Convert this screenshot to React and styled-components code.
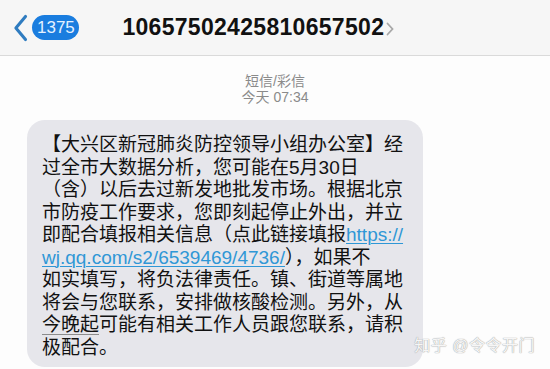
import styled, { createGlobalStyle } from 'styled-components';

const Global = createGlobalStyle`
  html, body {
    margin: 0;
    padding: 0;
    background: #fdfdfd;
    overflow: hidden;
  }
  body {
    font-family: "Liberation Sans", "Noto Sans CJK SC", sans-serif;
  }
`;

const Screen = styled.div`
  position: relative;
  width: 550px;
  height: 369px;
  overflow: hidden;
  display: flex;
  flex-direction: column;
  background: #fdfdfd;
`;

const Header = styled.div`
  height: 56px;
  flex-shrink: 0;
  display: flex;
  align-items: center;
  padding-left: 13px;
  background: #f6f6f6;
  border-bottom: 1px solid #dadada;
  box-sizing: border-box;
`;

const Badge = styled.div`
  margin-left: 4px;
  width: 47px;
  height: 25px;
  border-radius: 13px;
  background: #1a7ddf;
  color: #e4f1ff;
  font-size: 17px;
  display: flex;
  align-items: center;
  justify-content: center;
`;

const Title = styled.div`
  margin-left: 43px;
  font-size: 23px;
  font-weight: bold;
  color: #111;
  letter-spacing: 0.3px;
`;

const Meta = styled.div`
  margin-top: 17px;
  text-align: center;
  color: #8a8a8a;
  font-size: 14px;
  line-height: 16px;
`;

const Bubble = styled.div`
  margin: 15px 0 0 27px;
  width: 396px;
  box-sizing: border-box;
  padding: 14px 0 8px 15px;
  background: #e6e6eb;
  border-radius: 18px;
  font-size: 19px;
  line-height: 22.5px;
  color: #111;
  white-space: nowrap;
`;

const Line = styled.div``;

const Link = styled.span`
  color: #2f97d6;
  text-decoration: underline;
  text-decoration-thickness: 1px;
  text-underline-offset: 2px;
`;

const DateMark = styled.span`
  text-decoration: underline;
  text-decoration-color: #8c8c8c;
  text-decoration-thickness: 1px;
  text-underline-offset: 3px;
`;

const Watermark = styled.div`
  position: absolute;
  right: 15px;
  bottom: 13px;
  font-size: 16px;
  color: #f6f6f6;
  text-shadow: 0 0 1px #a8a8a8, 0 0 1px #a8a8a8;
  letter-spacing: 0.5px;
`;

function Chevron({ size = 28, color = '#2f7cc0', stroke = 3.2 }) {
  return (
    <svg width={size * 0.55} height={size} viewBox="0 0 16 28">
      <path d="M13 2 L3 14 L13 26" fill="none" stroke={color} strokeWidth={stroke} strokeLinecap="round" strokeLinejoin="round" />
    </svg>
  );
}

const Forward = styled.span`
  margin-left: 2px;
  display: inline-flex;
  vertical-align: middle;
`;

export default function App() {
  return (
    <Screen>
      <Global />
      <Header>
        <Chevron />
        <Badge>1375</Badge>
        <Title>
          10657502425810657502
          <Forward>
            <svg width="8" height="14" viewBox="0 0 8 14">
              <path d="M1.5 1.5 L6.5 7 L1.5 12.5" fill="none" stroke="#a8a8a8" strokeWidth="1.8" strokeLinecap="round" />
            </svg>
          </Forward>
        </Title>
      </Header>
      <Meta>
        <div>短信/彩信</div>
        <div>今天 07:34</div>
      </Meta>
      <Bubble>
        <Line>【大兴区新冠肺炎防控领导小组办公室】经</Line>
        <Line>过全市大数据分析，您可能在5月30日</Line>
        <Line>（含）以后去过新发地批发市场。根据北京</Line>
        <Line>市防疫工作要求，您即刻起停止外出，并立</Line>
        <Line>即配合填报相关信息（点此链接填报<Link>https://</Link></Line>
        <Line><Link>wj.qq.com/s2/6539469/4736/</Link>），如果不</Line>
        <Line>如实填写，将负法律责任。镇、街道等属地</Line>
        <Line>将会与您联系，安排做核酸检测。另外，从</Line>
        <Line><DateMark>今晚起</DateMark>可能有相关工作人员跟您联系，请积</Line>
        <Line>极配合。</Line>
      </Bubble>
      <Watermark>知乎 @令令开门</Watermark>
    </Screen>
  );
}
